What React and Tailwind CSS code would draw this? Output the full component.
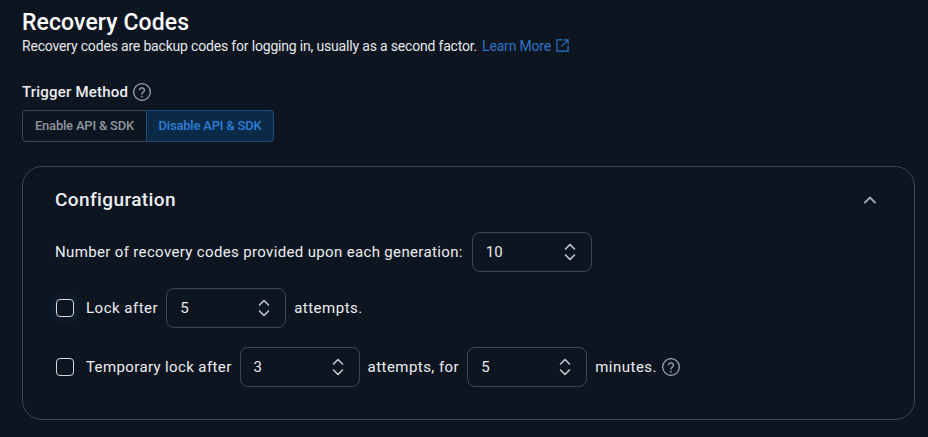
import React from "react";

function Help({ className = "" }) {
  return (
    <svg viewBox="0 0 24 24" fill="none" stroke="currentColor" strokeWidth="1.5" strokeLinecap="round" strokeLinejoin="round" className={className}>
      <circle cx="12" cy="12" r="10" />
      <path d="M9 9.300a3 3 0 0 1 5.900.7c0 2-3 2.600-3 4.400" />
      <path d="M12 17.600h.01" strokeWidth="2" />
    </svg>
  );
}

function Stepper({ value, className = "" }) {
  return (
    <div className={`flex h-10 w-[120px] shrink-0 items-center justify-between rounded-lg border border-[#3d4653] pl-[13px] pr-[15px] text-[15px] tracking-normal text-[#e8eaed] ${className}`}>
      <span>{value}</span>
      <svg viewBox="0 0 12 18" fill="none" stroke="#c4c8ce" strokeWidth="1.6" strokeLinecap="round" strokeLinejoin="round" className="h-[18px] w-3">
        <path d="M1.500 6 6 1.500 10.500 6" />
        <path d="M1.500 12 6 16.500 10.500 12" />
      </svg>
    </div>
  );
}

function Check({ glow }) {
  return (
    <span className={`ml-px block h-[18px] w-[18px] shrink-0 rounded-[4px] border-[1.5px] border-[#d5d9de] ${glow ? "shadow-[0_0_6px_6px_#0f1c2c]" : ""}`} />
  );
}

export default function App() {
  return (
    <div className="h-[437px] w-[928px] overflow-hidden bg-[#0d1520] pl-[22px] pr-[13px] pt-[9px] font-['Roboto',sans-serif] text-[#eceef0]">
      <h1 className="h-[27px] text-[23px] font-medium leading-7 tracking-[0.1px] text-white">Recovery Codes</h1>
      <p className="flex h-5 items-center text-[14px] leading-5 tracking-[-0.18px] text-[#e6e8ea]">
        Recovery codes are backup codes for logging in, usually as a second factor.
        <span className="ml-[5px] flex items-center gap-[5px] text-[#2b74c4]">
          Learn More
          <svg viewBox="0 0 14 14" fill="none" stroke="currentColor" strokeWidth="1.3" className="mb-[2px] h-[13px] w-[13px]">
            <path d="M7 1H1v12h12V7" />
            <path d="M8.500 1H13v4.500M13 1 6 8" />
          </svg>
        </span>
      </p>

      <div className="mt-[26px] flex h-5 items-center gap-1 text-[15px] font-medium tracking-[0.2px]">
        <span>Trigger Method</span>
        <Help className="h-5 w-5 text-[#a4a9b0]" />
      </div>
      <div className="mt-[8px] flex h-8 w-fit rounded border border-[#3d4653] text-[13px] font-medium tracking-[-0.2px]">
        <span className="flex w-[123px] items-center justify-center text-[#8f969f]">Enable API &amp; SDK</span>
        <span className="-my-px -mr-px flex w-[128px] items-center justify-center rounded-r border border-[#1f4a75] bg-[#0b2a48] text-[#2b7fd6]">Disable API &amp; SDK</span>
      </div>

      <section className="mt-6 h-[254px] rounded-[20px] border border-[#3d4653] px-8 pt-[21px]">
        <div className="flex h-6 items-center justify-between pr-[5px]">
          <h2 className="text-[19px] font-medium tracking-[0.4px] text-[#eceef0]">Configuration</h2>
          <svg viewBox="0 0 14 10" fill="none" stroke="#a4a9b0" strokeWidth="1.8" strokeLinecap="round" strokeLinejoin="round" className="h-[10px] w-[14px]">
            <path d="M2 7.500 7 2.500 12 7.500" />
          </svg>
        </div>

        <div className="mt-5 flex h-10 items-center text-[15px] tracking-[0.35px]">
          <span>Number of recovery codes provided upon each generation:</span>
          <Stepper value="10" className="ml-[9px]" />
        </div>

        <div className="mt-4 flex h-10 items-center text-[15px] tracking-[0.5px]">
          <Check glow />
          <span className="ml-3">Lock after</span>
          <Stepper value="5" className="ml-2" />
          <span className="ml-2">attempts.</span>
        </div>

        <div className="mt-[19px] flex h-10 items-center text-[15px] tracking-[0.38px]">
          <Check />
          <span className="ml-3">Temporary lock after</span>
          <Stepper value="3" className="ml-2" />
          <span className="ml-2 tracking-[0.45px]">attempts, for</span>
          <Stepper value="5" className="ml-2" />
          <span className="ml-2 tracking-[0.5px]">minutes.</span>
          <Help className="ml-1 h-5 w-5 text-[#a4a9b0]" />
        </div>
      </section>
    </div>
  );
}
